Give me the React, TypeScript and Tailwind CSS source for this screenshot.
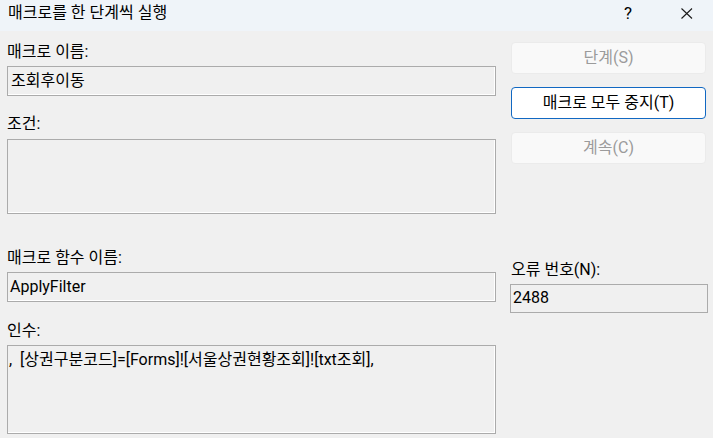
const font = "font-['Roboto','Noto_Sans_CJK_KR',sans-serif]";

function Field({ label, value, boxClass }: { label: string; value?: string; boxClass: string }) {
  return (
    <div className="flex flex-col">
      <div className="h-[20px] leading-[20px]">{label}</div>
      <div
        className={`mt-[4px] border border-[#ababab] shadow-[inset_-1px_-1px_0_#ffffff] bg-[#f0f0f0] ${boxClass}`}
      >
        {value}
      </div>
    </div>
  );
}

function DialogButton({ label, active }: { label: string; active?: boolean }) {
  return (
    <button
      className={
        active
          ? 'h-[32px] w-[195px] rounded-[4px] border border-[#1168c2] bg-white text-black leading-[20px]'
          : 'h-[32px] w-[195px] rounded-[4px] border border-[#ebebeb] bg-[#f9f9f9] text-[#9b9b9b] leading-[20px]'
      }
    >
      {label}
    </button>
  );
}

export default function App() {
  return (
    <div className={`w-[713px] h-[438px] bg-[#f0f0f0] text-[16px] text-black overflow-hidden flex flex-col ${font}`}>
      {/* title bar */}
      <div className="h-[31px] shrink-0 bg-[#eff4f9] flex items-start">
        <div className="pl-[8px] pt-[3px] leading-[20px] flex-1">매크로를 한 단계씩 실행</div>
        <div className="pt-[3px] leading-[20px] w-[10px] mr-[47px] text-[17px]">?</div>
        <div className="pt-[8px] mr-[20px]">
          <svg width="12" height="11" viewBox="0 0 12 11" fill="none" stroke="#1a1a1a" strokeWidth="1.1">
            <path d="M0.5 0.5 L11 10.5 M11 0.5 L0.5 10.5" />
          </svg>
        </div>
      </div>

      {/* body */}
      <div className="pt-[11px] pl-[7px] flex flex-col">
        <div className="flex">
          <div className="w-[489px] flex flex-col">
            <Field label="매크로 이름:" value="조회후이동" boxClass="h-[30px] pl-[3px] leading-[27px]" />
            <div className="mt-[18px]">
              <div className="h-[20px] leading-[20px]">조건:</div>
              <div className="mt-[5px] h-[75px] border border-[#ababab] shadow-[inset_-1px_-1px_0_#ffffff]" />
            </div>
          </div>
          <div className="ml-[15px] flex flex-col gap-[13px]">
            <DialogButton label="단계(S)" />
            <DialogButton label="매크로 모두 중지(T)" active />
            <DialogButton label="계속(C)" />
          </div>
        </div>

        <div className="flex mt-[34px]">
          <div className="w-[489px] flex flex-col">
            <Field label="매크로 함수 이름:" value="ApplyFilter" boxClass="h-[30px] pl-[2px] leading-[27px]" />
            <div className="mt-[19px]">
              <Field
                label="인수:"
                value=",  [상권구분코드]=[Forms]![서울상권현황조회]![txt조회],"
                boxClass="h-[89px] pl-[1px] pt-[4px] leading-[20px] whitespace-pre"
              />
            </div>
          </div>
          <div className="ml-[14px] mt-[12px] w-[198px]">
            <div className="h-[20px] leading-[20px] pl-[1px]">오류 번호(N):</div>
            <div className="mt-[4px] h-[29px] border border-[#ababab] pl-[2px] leading-[26px]">2488</div>
          </div>
        </div>
      </div>
    </div>
  );
}
